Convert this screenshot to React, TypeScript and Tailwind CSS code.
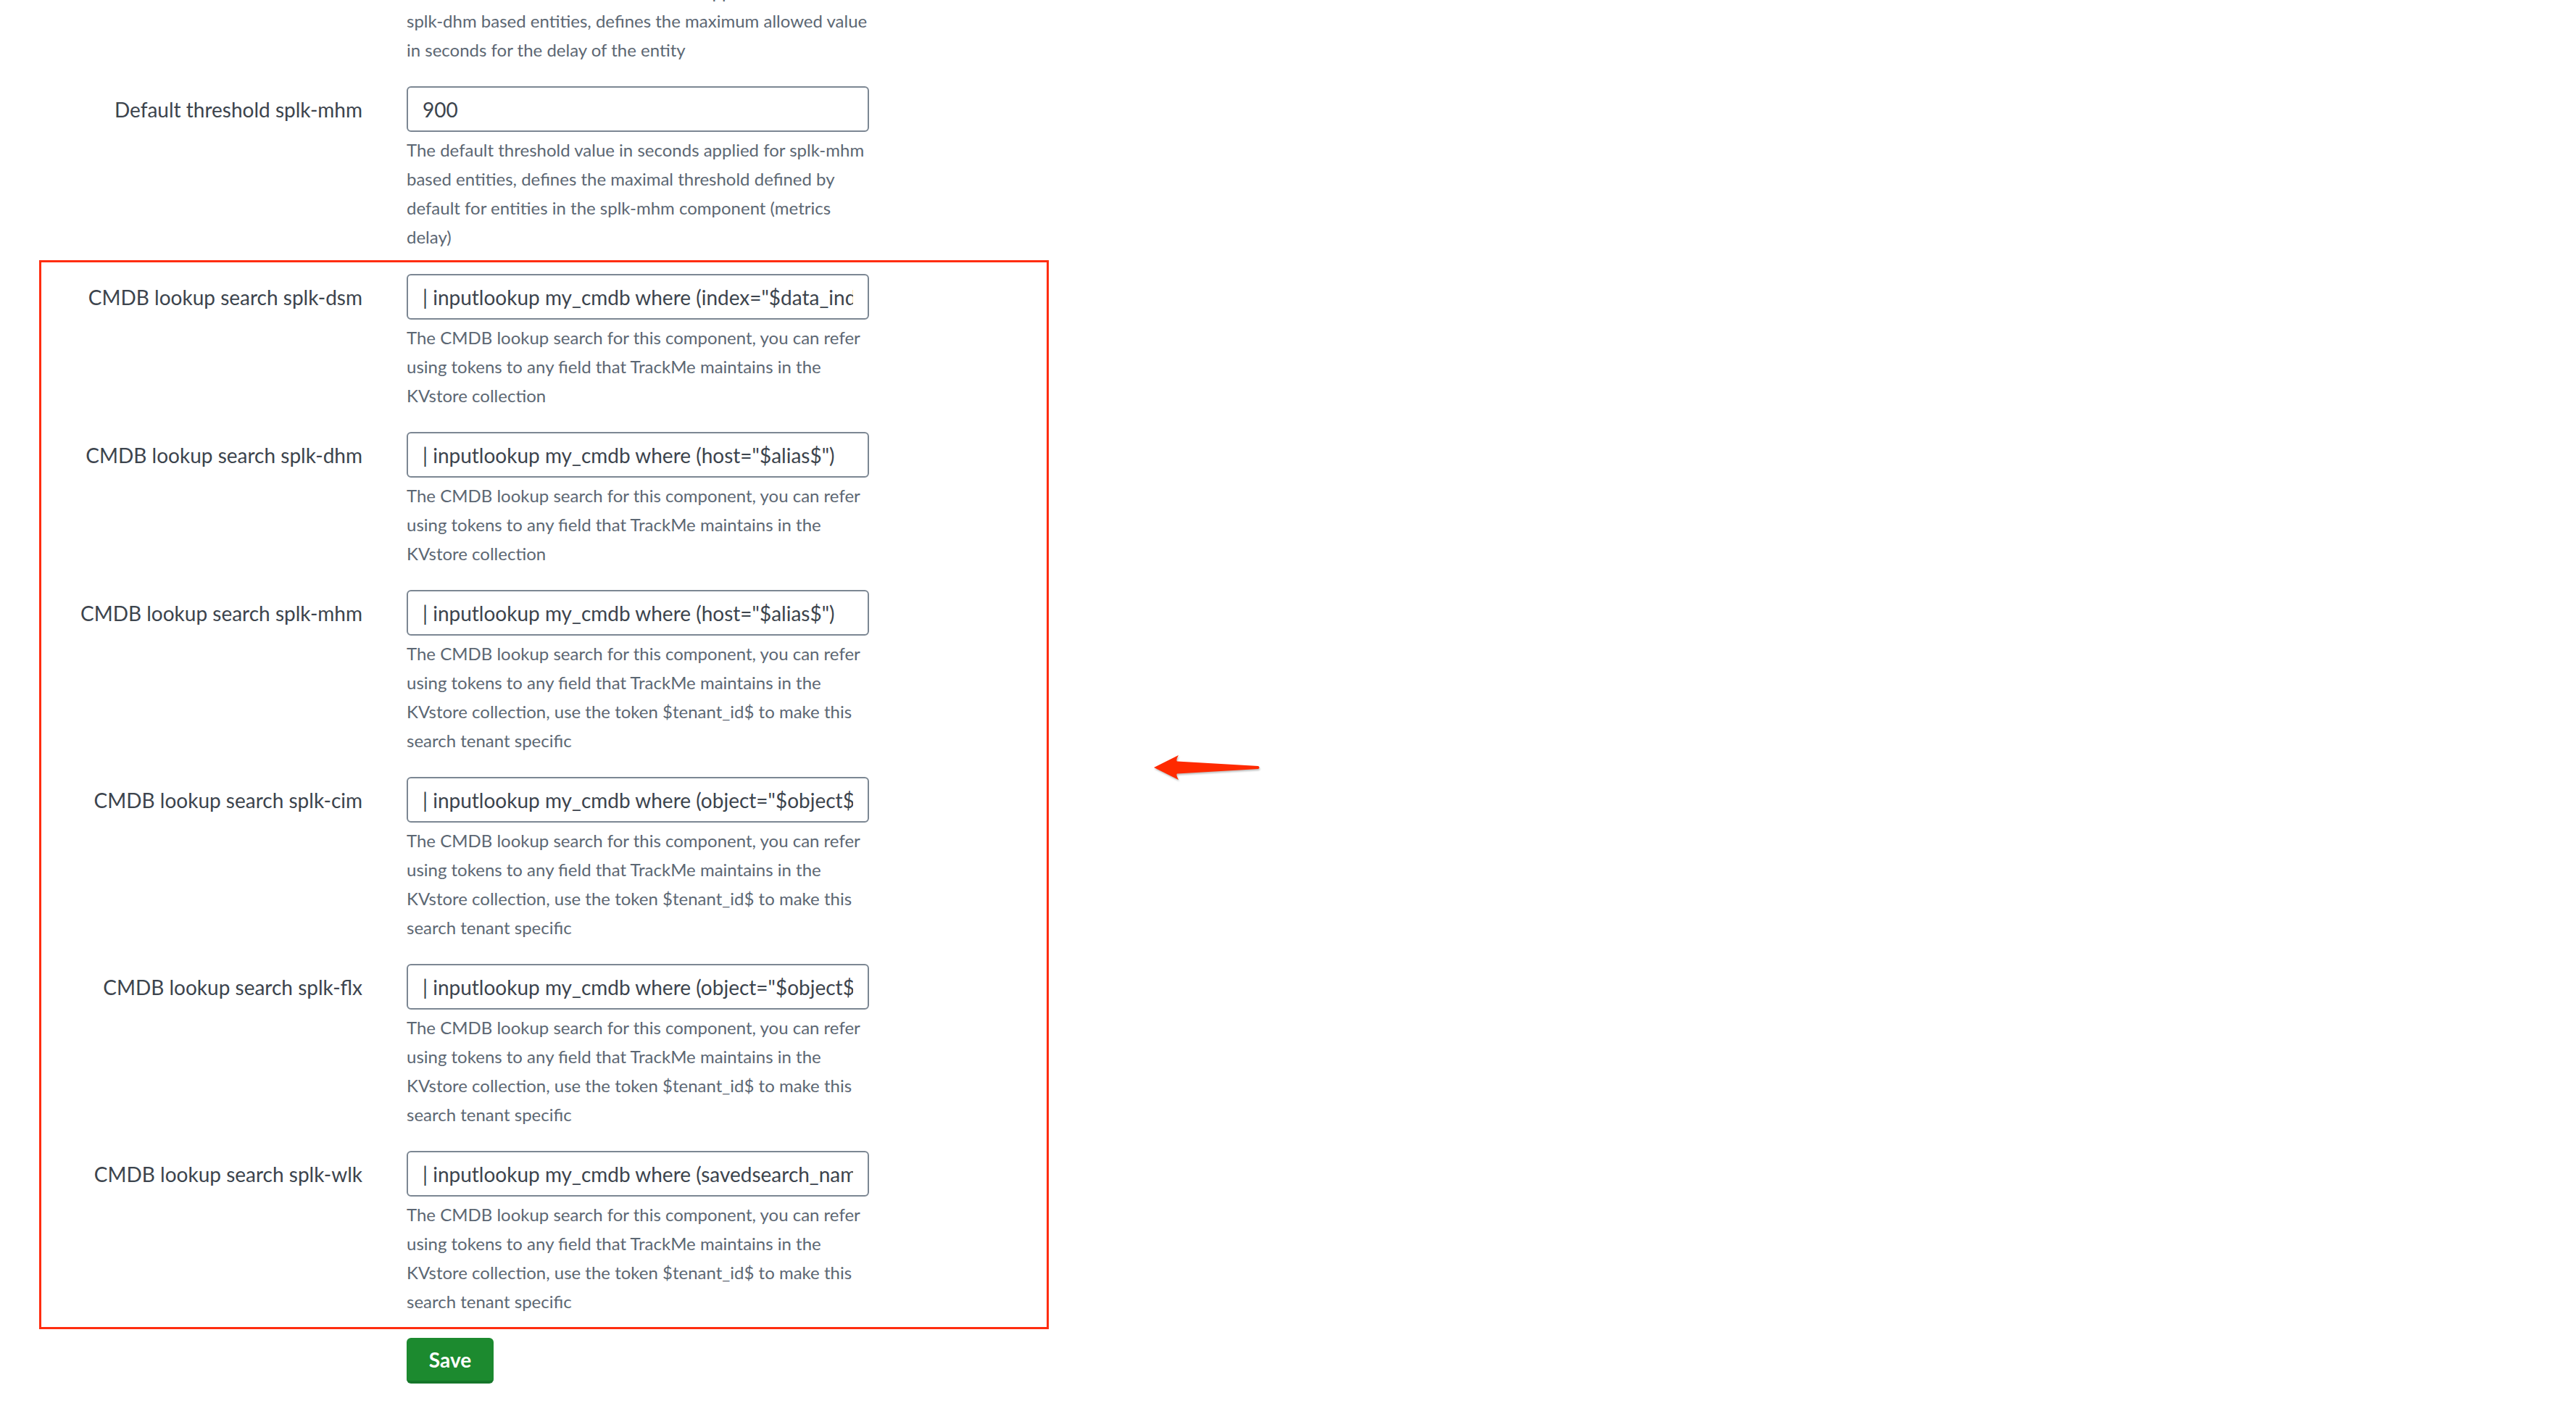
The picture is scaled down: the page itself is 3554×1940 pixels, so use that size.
import React from 'react';

type Field = {
  label: string;
  value: string;
  help: string[];
};

const CMDB_HELP_SHORT = [
  'The CMDB lookup search for this component, you can refer',
  'using tokens to any field that TrackMe maintains in the',
  'KVstore collection',
];

const CMDB_HELP_TENANT = [
  'The CMDB lookup search for this component, you can refer',
  'using tokens to any field that TrackMe maintains in the',
  'KVstore collection, use the token $tenant_id$ to make this',
  'search tenant specific',
];

const cmdbFields: Field[] = [
  { label: 'CMDB lookup search splk-dsm', value: '| inputlookup my_cmdb where (index="$data_index$" OR sourcetype="$data_sourcetype$")', help: CMDB_HELP_SHORT },
  { label: 'CMDB lookup search splk-dhm', value: '| inputlookup my_cmdb where (host="$alias$")', help: CMDB_HELP_SHORT },
  { label: 'CMDB lookup search splk-mhm', value: '| inputlookup my_cmdb where (host="$alias$")', help: CMDB_HELP_TENANT },
  { label: 'CMDB lookup search splk-cim', value: '| inputlookup my_cmdb where (object="$object$")', help: CMDB_HELP_TENANT },
  { label: 'CMDB lookup search splk-flx', value: '| inputlookup my_cmdb where (object="$object$")', help: CMDB_HELP_TENANT },
  { label: 'CMDB lookup search splk-wlk', value: '| inputlookup my_cmdb where (savedsearch_name="$savedsearch_name$")', help: CMDB_HELP_TENANT },
];

const HelpText: React.FC<{ lines: string[] }> = ({ lines }) => (
  <div className="mt-[5px] text-[24px] leading-[40px] text-[#5c6773]">
    {lines.map((l, i) => (
      <div key={i} className="whitespace-nowrap">{l}</div>
    ))}
  </div>
);

const FormRow: React.FC<{ field: Field }> = ({ field }) => (
  <div className="flex mb-[30px]">
    <label className="w-[500px] h-[63px] flex items-center justify-end text-[28px] text-[#3c444d] whitespace-nowrap">
      {field.label}
    </label>
    <div className="ml-[61px] w-[638px]">
      <input
        type="text"
        readOnly
        defaultValue={field.value}
        className="block w-full h-[63px] border-2 border-[#7c8793] rounded-[6px] px-[20px] text-[28px] text-[#3c444d] bg-white outline-none"
      />
      <HelpText lines={field.help} />
    </div>
  </div>
);

const RedArrow = () => (
  <svg width="160" height="44" viewBox="0 0 160 44" className="drop-shadow-[1px_2px_1px_rgba(0,0,0,0.25)]">
    <path
      d="M4 22 L38 5 Q34 12 36 13.5 L148 20 Q151 22 148 24 L36 30.5 Q34 32 38 39 Z"
      fill="#ff2a00"
    />
  </svg>
);

export default function App() {
  return (
    <div className="relative min-h-screen w-full bg-white font-['Lato','Liberation_Sans',sans-serif] overflow-hidden">
      <div className="w-[1480px]">
        {/* tail of the previous field's help text */}
        <div className="flex -mt-[31px] mb-[30px]">
          <div className="w-[500px]" />
          <div className="ml-[61px] w-[638px] text-[24px] leading-[40px] text-[#5c6773]">
            <div className="whitespace-nowrap">The default threshold value in seconds applied for</div>
            <div className="whitespace-nowrap">splk-dhm based entities, defines the maximum allowed value</div>
            <div className="whitespace-nowrap">in seconds for the delay of the entity</div>
          </div>
        </div>

        <div className="flex mb-[31px]">
          <label className="w-[500px] h-[63px] flex items-center justify-end text-[28px] text-[#3c444d] whitespace-nowrap">
            Default threshold splk-mhm
          </label>
          <div className="ml-[61px] w-[638px]">
            <input
              type="text"
              readOnly
              defaultValue="900"
              className="block w-full h-[63px] border-2 border-[#7c8793] rounded-[6px] px-[20px] text-[28px] text-[#3c444d] bg-white outline-none"
            />
            <HelpText
              lines={[
                'The default threshold value in seconds applied for splk-mhm',
                'based entities, defines the maximal threshold defined by',
                'default for entities in the splk-mhm component (metrics',
                'delay)',
              ]}
            />
          </div>
        </div>

        {/* highlighted CMDB section */}
        <div className="relative">
          <div className="absolute left-[54px] w-[1393px] -top-[19px] -bottom-[18px] border-[3px] border-[#ff2d0f] pointer-events-none" />
          {cmdbFields.map((f) => (
            <FormRow key={f.label} field={f} />
          ))}
        </div>

        <div className="flex">
          <div className="w-[500px]" />
          <div className="ml-[61px]">
            <button className="w-[120px] h-[63px] rounded-[6px] bg-[#1c8a2f] border-b-[4px] border-[#15762a] text-white text-[28px] font-bold">
              Save
            </button>
          </div>
        </div>
      </div>

      <div className="absolute left-[1588px] top-[1037px]">
        <RedArrow />
      </div>
    </div>
  );
}
